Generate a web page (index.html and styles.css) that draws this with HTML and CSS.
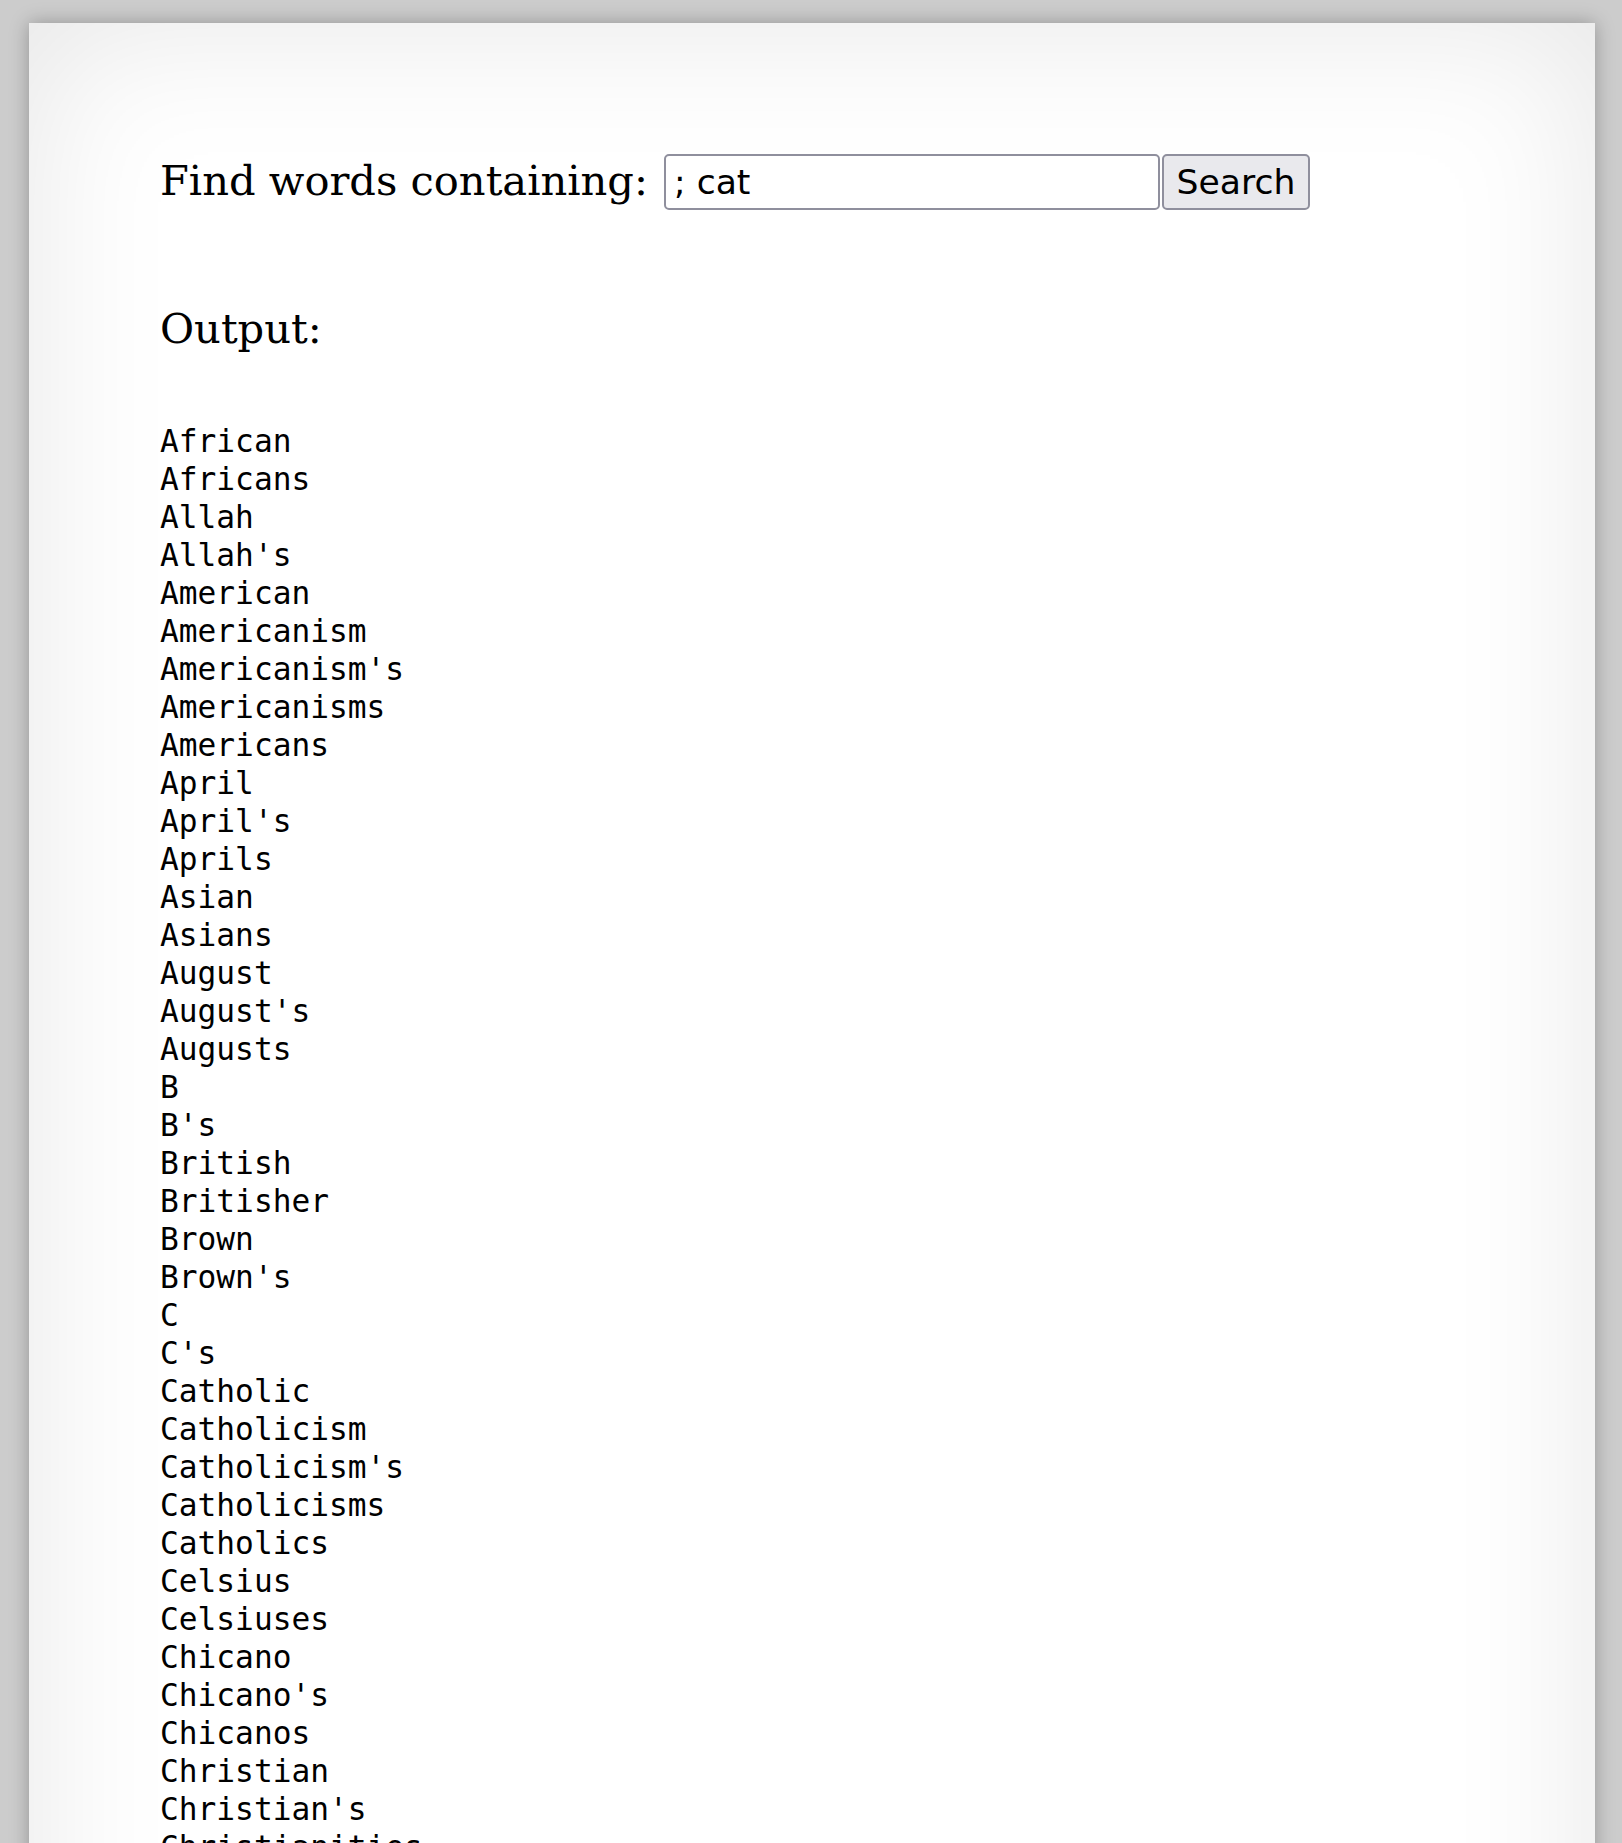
FILE: index.html
```html
<!DOCTYPE html>
<html lang="en">
<head>
<meta charset="utf-8">
<title>Find words</title>
<link rel="stylesheet" href="styles.css">
</head>
<body>
<div class="paper">
  <form class="search-row">
    <label class="search-label" for="q">Find words containing:</label>
    <input class="search-input" id="q" type="text" value="; cat">
    <button class="search-button" type="button">Search</button>
  </form>
  <h2 class="output-title">Output:</h2>
  <pre class="output-list">African
Africans
Allah
Allah's
American
Americanism
Americanism's
Americanisms
Americans
April
April's
Aprils
Asian
Asians
August
August's
Augusts
B
B's
British
Britisher
Brown
Brown's
C
C's
Catholic
Catholicism
Catholicism's
Catholicisms
Catholics
Celsius
Celsiuses
Chicano
Chicano's
Chicanos
Christian
Christian's
Christianities
Christianity
Christianity's
Christians
Christmas
Christmases</pre>
</div>
</body>
</html>
```
FILE: styles.css
```css
html, body {
  margin: 0;
  padding: 0;
}
body {
  background: #cccccc;
  padding: 23px 27px 0 29px;
  font-family: "DejaVu Serif", serif;
  color: #000;
}
.paper {
  background: #ffffff;
  box-shadow: 0 0 18px rgba(0, 0, 0, 0.28), inset 0 0 150px rgba(0, 0, 0, 0.1);
  padding: 131px 131px 200px 131px;
}
.search-row {
  display: flex;
  align-items: center;
  margin: 0;
}
.search-label {
  font-size: 41.6px;
  line-height: normal;
  margin: 0 16px 4px 0;
}
.search-input {
  box-sizing: border-box;
  width: 496px;
  height: 56px;
  border: 2px solid #8f8f9d;
  border-radius: 5px;
  padding: 0 8px;
  font-family: "DejaVu Sans", sans-serif;
  font-size: 34.6px;
  color: #000;
  background: #fff;
  margin: 0;
}
.search-button {
  box-sizing: border-box;
  width: 148px;
  height: 56px;
  margin: 0 0 0 2px;
  border: 2px solid #8f8f9d;
  border-radius: 5px;
  background: #e9e9ed;
  font-family: "DejaVu Sans", sans-serif;
  font-size: 34.6px;
  color: #000;
  padding: 0;
}
.output-title {
  font-size: 41.6px;
  font-weight: normal;
  line-height: normal;
  margin: 94px 0 0 0;
}
.output-list {
  font-family: "DejaVu Sans Mono", monospace;
  font-size: 31.2px;
  line-height: 38px;
  margin: 69px 0 0 0;
}
```
